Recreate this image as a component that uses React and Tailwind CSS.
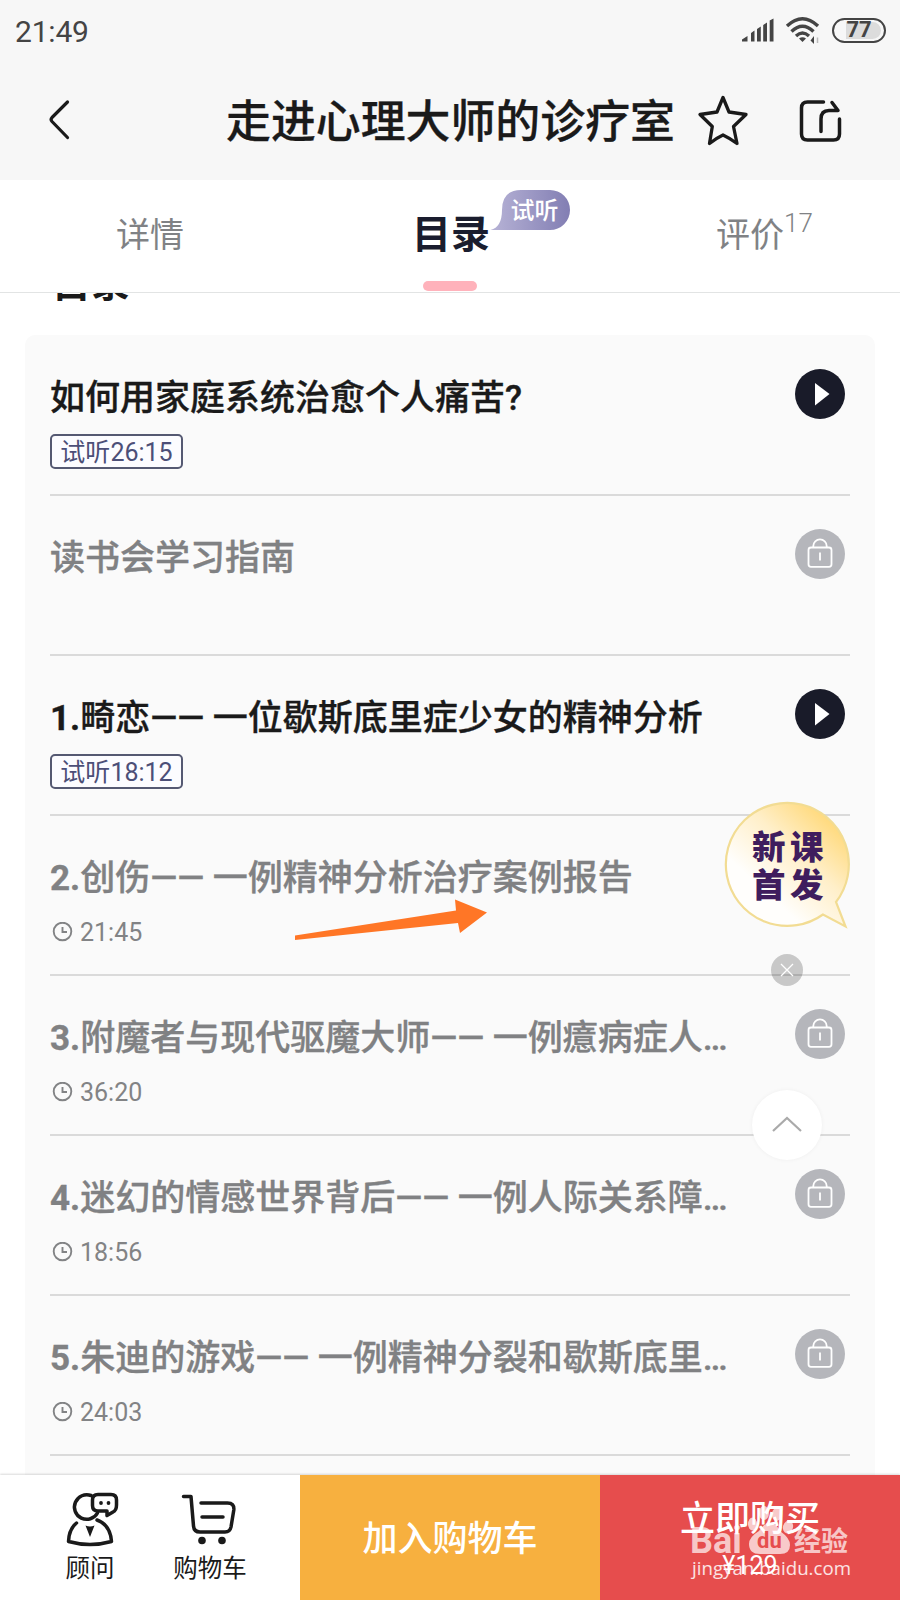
import React from 'react';

const lessons = [
  { title: '如何用家庭系统治愈个人痛苦?', time: '26:15', trial: true },
  { title: '读书会学习指南' },
  { no: '1.', title: '畸恋—— 一位歇斯底里症少女的精神分析', time: '18:12', trial: true },
  { no: '2.', title: '创伤—— 一例精神分析治疗案例报告', time: '21:45' },
  { no: '3.', title: '附魔者与现代驱魔大师—— 一例癔病症人…', time: '36:20' },
  { no: '4.', title: '迷幻的情感世界背后—— 一例人际关系障…', time: '18:56' },
  { no: '5.', title: '朱迪的游戏—— 一例精神分裂和歇斯底里…', time: '24:03' },
];

const App = () => {
  return (
    <div className="relative flex h-[1600px] w-[900px] flex-col overflow-hidden bg-white font-['Roboto','Noto_Sans_CJK_SC',sans-serif] text-[#1a1a1a]">
      <header className="h-[180px] shrink-0 bg-[#f7f7f7]">
        <StatusBar />
        <div className="flex h-[120px] items-center pl-[47px] pr-[57px]">
          <BackIcon />
          <h1 className="ml-[154px] whitespace-nowrap pt-[6px] text-[44.9px] font-medium leading-[60px] [-webkit-text-stroke:0.3px]">走进心理大师的诊疗室</h1>
          <StarIcon />
          <ShareIcon />
        </div>
      </header>

      <Tabs />

      <main className="min-h-0 flex-1 overflow-hidden px-[25px]">
        <h2 className="-mt-[37px] ml-[27px] h-[79px] text-[39px] font-bold leading-[56px]">目录</h2>
        <ul className="h-[1200px] rounded-[10px] bg-[#fafafa] px-[25px] pt-px">
          {lessons.map((lesson) => (
            <Lesson key={lesson.title} {...lesson} />
          ))}
        </ul>
      </main>

      <BottomBar />

      <Arrow />
      <Promo />
      <Watermark />
    </div>
  );
};

const StatusBar = () => (
  <div className="flex h-[60px] items-center pl-[15px] pr-[14px] text-[#444]">
    <span className="flex-1 pt-[3px] text-[30px] leading-none tracking-[-0.2px]">21:49</span>
    <svg width="33" height="24" viewBox="0 0 33 24" fill="currentColor">
      <path d="M1 23.500V21.500L6.500 18V23.500ZM10 23.500V15L13.500 12.500V23.500ZM16 23.500V11L19.800 8.500V23.500ZM22.200 23.500V7L26 4.500V23.500ZM28.700 23.500V2.500L32.500 .500V23.500Z" />
    </svg>
    <svg className="ml-[11px]" width="36" height="28" viewBox="0 0 36 28" fill="none" stroke="currentColor" strokeWidth="3.400">
      <path d="M2 10Q17.500 -4.500 33 10" />
      <path d="M6.500 15.500Q17.500 5 28.500 15.500" />
      <path d="M11 20Q17.500 14 24 20" />
      <path d="M17.500 26L14 22.500Q17.500 20 21 22.500Z" fill="currentColor" stroke="none" />
      <path d="M29 20V28L25.500 24.500Z" fill="currentColor" stroke="none" />
      <path d="M32.500 27V21.500" stroke="#bbb" strokeWidth="1.500" />
    </svg>
    <div className="relative ml-[11px] flex h-[25px] w-[54px] items-center justify-center rounded-full border-2 border-[#444]">
      <span className="absolute right-[3px] top-[2px] h-[17px] w-[35px] rounded-r-full bg-[#dcdcdc]" />
      <span className="relative text-[22px] font-bold leading-none">77</span>
    </div>
  </div>
);

const Tabs = () => (
  <nav className="relative z-10 grid h-[113px] shrink-0 grid-cols-3 border-b border-[#e2e4e4] bg-white text-center text-[34px] leading-[50px] text-[#808285]">
    <div className="pt-[30px]">详情</div>
    <div className="relative pl-[2px] pt-[30px] text-[39px] font-bold text-[#1a1d2e]">
      目录
      <span className="absolute bottom-[1px] left-[123px] h-[10px] w-[54px] rounded-full bg-[#ffb2bb]" />
      <div className="absolute left-[190px] top-[10px] h-10 w-20">
        <svg className="absolute inset-0" width="80" height="40" viewBox="0 0 80 40">
          <defs>
            <linearGradient id="tag">
              <stop offset="0" stopColor="#b7b3d6" />
              <stop offset="1" stopColor="#827eb3" />
            </linearGradient>
          </defs>
          <path d="M.500 40Q12 37 12 20Q12 0 31 0H60A20 20 0 0 1 60 40Z" fill="url(#tag)" />
        </svg>
        <span className="relative block pl-[9px] pt-px text-[24px] font-medium leading-10 text-white">试听</span>
      </div>
    </div>
    <div className="relative pt-[30px]">
      <span>评价</span>
      <span className="absolute left-[184px] top-[30px] text-[26px] font-light leading-[26px]">17</span>
    </div>
  </nav>
);

const Lesson = ({ no, title, time, trial }) => (
  <li className="flex h-40 justify-between border-b-2 border-[#dadada]">
    <div className="pt-[38px]">
      <h3 className={trial ? 'whitespace-nowrap text-[35px] font-medium leading-[50px] text-[#1a1a1a] [-webkit-text-stroke:0.35px]' : 'whitespace-nowrap text-[35px] font-medium leading-[50px] text-[#808183] [-webkit-text-stroke:0.35px]'}>
        <span className="font-bold">{no}</span>
        {title}
      </h3>
      {trial && (
        <span className="mt-[10px] flex h-[35px] w-[133px] items-center justify-center rounded-[5px] border-2 border-[#555972] bg-[#fcfcff] pt-px text-[25px] leading-none text-[#4c4f78]">
          试听{time}
        </span>
      )}
      {!trial && time && (
        <span className="mt-[13px] flex h-[30px] items-center gap-[7px] pl-[2px] text-[25px] leading-none text-[#828385]">
          <svg width="21" height="21" viewBox="0 0 21 21" fill="none" stroke="currentColor" strokeWidth="1.900">
            <circle cx="10.500" cy="9.500" r="8.800" />
            <path d="M10.500 5V10H15" />
          </svg>
          {time}
        </span>
      )}
    </div>
    <div className="mr-[5px] mt-[33px]">{trial ? <PlayIcon /> : <LockIcon />}</div>
  </li>
);

const PlayIcon = () => (
  <svg width="50" height="50" viewBox="0 0 50 50">
    <circle cx="25" cy="25" r="25" fill="#191b29" />
    <path d="M20 14L34.500 25L20 36.500Z" fill="#fff" />
  </svg>
);

const LockIcon = () => (
  <svg width="50" height="50" viewBox="0 0 50 50" fill="none" stroke="#fff" strokeWidth="1.800">
    <circle cx="25" cy="25" r="25" fill="#b5b6bb" stroke="none" />
    <rect x="13.500" y="18.500" width="23" height="19.300" rx="2.500" />
    <path d="M18.300 18.500V17A6.700 6.700 0 0 1 31.700 17V18.500M25 23.500V31.500" />
  </svg>
);

const BackIcon = () => (
  <svg width="25" height="42" viewBox="0 0 25 42" fill="none" stroke="currentColor" strokeWidth="3.200" strokeLinecap="round" strokeLinejoin="round">
    <path d="M20.500 3L5 18.500Q3.200 20.500 5 22.500L20.500 38.500" />
  </svg>
);

const StarIcon = () => (
  <svg className="ml-[22px]" width="52" height="52" viewBox="0 0 52 52" fill="none" stroke="currentColor" strokeWidth="3.300" strokeLinejoin="round">
    <path d="M26 3.500L32 18L49 20.500L36.500 32.500L40 49.500Q32.500 44 26 41Q19.500 44 12.500 49.500L15.300 32.500L3 20.500L20 18Z" />
  </svg>
);

const ShareIcon = () => (
  <svg className="ml-auto mt-[2px]" width="44" height="44" viewBox="0 0 44 44" fill="none" stroke="currentColor" strokeWidth="3.500" strokeLinecap="round" strokeLinejoin="round">
    <path d="M24.500 3H8.500Q2.500 3 2.500 9V35Q2.500 41 8.500 41H34.500Q40.500 41 40.500 35V20" />
    <path d="M22 32.500V20Q22 11.500 30 11.500H39L33 3.500" />
  </svg>
);

const BottomBar = () => (
  <footer className="relative z-10 grid h-[125px] shrink-0 grid-cols-3 bg-white shadow-[0_-1px_2px_rgba(0,0,0,0.15)]">
    <div className="flex pl-[60px] pt-[14px] text-[24.500px] leading-[34px]">
      <div className="flex w-[60px] flex-col items-center">
        <svg width="60" height="60" viewBox="0 0 60 60" fill="none" stroke="currentColor" strokeWidth="3.500" strokeLinecap="round" strokeLinejoin="round">
          <path d="M31 6.500A12.300 12.300 0 1 0 37.500 24" />
          <path d="M16.500 34Q9 40 8.500 52.500Q30 58.500 51.500 52.500Q50.500 36 37 31" />
          <path d="M25.500 36.500Q30 38.500 34.500 36.500L30 48Z" fill="currentColor" stroke="none" />
          <path d="M38 5.500H51Q56.500 5.500 56.500 11V16Q56.500 21.500 53 23L47 26.500V22H38Q32.500 22 32.500 16.500V11Q32.500 5.500 38 5.500Z" />
          <circle cx="41" cy="14" r="1.900" fill="currentColor" stroke="none" />
          <circle cx="48.500" cy="14" r="1.900" fill="currentColor" stroke="none" />
        </svg>
        <span className="mt-[3px]">顾问</span>
      </div>
      <div className="ml-[50px] flex w-20 flex-col items-center">
        <svg width="60" height="60" viewBox="0 0 60 60" fill="none" stroke="currentColor" strokeWidth="3.500" strokeLinecap="round" strokeLinejoin="round">
          <path d="M3.500 7.500H11L13.500 37Q14 43 20 43H45Q50 43 51 38L53.800 21Q54.500 14 47.500 14H21" />
          <path d="M22 28H43" />
          <circle cx="22" cy="51.500" r="3.800" fill="currentColor" stroke="none" />
          <circle cx="42" cy="51.500" r="3.800" fill="currentColor" stroke="none" />
        </svg>
        <span className="mt-[3px] whitespace-nowrap">购物车</span>
      </div>
    </div>
    <button className="bg-[#f7b03f] pt-[6px] text-[35px] font-medium text-white">加入购物车</button>
    <button className="flex flex-col items-center bg-[#e64d4d] pt-[20px] text-white">
      <span className="text-[35px] font-medium leading-[50px]">立即购买</span>
      <span className="mt-[6px] text-[25px] leading-[30px]">¥129</span>
    </button>
  </footer>
);

const Arrow = () => (
  <svg className="absolute left-[294px] top-[898px]" width="194" height="44" viewBox="0 0 194 44">
    <path d="M1 37.500L162 12.500L161 1.500L193 14.500L166 35L164 25L1 42Z" fill="#ff7626" />
  </svg>
);

const Promo = () => (
  <div className="absolute left-[724px] top-[801px] flex w-[127px] flex-col items-center">
    <div className="relative h-[128px] w-[127px]">
      <svg className="absolute inset-0" width="127" height="128" viewBox="0 0 127 128">
        <defs>
          <linearGradient id="promo" x1="0.850" y1="0.100" x2="0.300" y2="0.700">
            <stop offset="0" stopColor="#ffd877" />
            <stop offset="0.500" stopColor="#ffefc9" />
            <stop offset="1" stopColor="#fffefc" />
          </linearGradient>
        </defs>
        <path d="M112 101A61.500 61.500 0 1 0 99 113.500L121.500 125.500Z" fill="url(#promo)" stroke="#f2dc93" strokeWidth="2.200" />
      </svg>
      <div className="relative pl-[28px] pt-[28px] text-[33.500px] font-black leading-[38px] tracking-[4.500px] text-[#3f1d5e]">
        <p>新课</p>
        <p>首发</p>
      </div>
    </div>
    <span className="mr-px mt-[25px] flex size-8 items-center justify-center rounded-full bg-black/20">
      <svg width="14" height="14" viewBox="0 0 14 14" stroke="#fff" strokeWidth="1.300">
        <path d="M1 1L13 13M13 1L1 13" />
      </svg>
    </span>
    <span className="mr-px mt-[104px] flex size-[70px] items-center justify-center rounded-full bg-white shadow-[0_0_4px_rgba(0,0,0,0.05)]">
      <svg width="30" height="18" viewBox="0 0 30 18" fill="none" stroke="#aaa" strokeWidth="2.200">
        <path d="M1 15L15 2L29 15" />
      </svg>
    </span>
  </div>
);

const Watermark = () => (
  <div className="absolute left-[690px] top-[1504px] z-20 w-[162px] text-white/70">
    <div className="flex h-[54px] items-end">
      <span className="w-[58px] text-[36px] font-bold leading-[34px]">Bai</span>
      <div className="relative h-[54px] w-[46px]">
        <svg width="46" height="54" viewBox="0 0 46 54" fill="currentColor">
          <ellipse cx="4.500" cy="20" rx="4.500" ry="6.500" />
          <ellipse cx="16" cy="9" rx="5" ry="7" />
          <ellipse cx="29" cy="10" rx="5" ry="7" transform="rotate(10 29 10)" />
          <ellipse cx="40" cy="23" rx="5" ry="6.500" transform="rotate(15 40 23)" />
          <path d="M22 19Q28 19 32 27Q42 34 42 41Q42 50 32 50H12Q1 50 1 40Q1 33 11 27Q16 19 22 19Z" />
        </svg>
        <span className="absolute left-[9px] top-[26px] text-[22px] font-bold leading-[22px] text-[#e64d4d]">du</span>
      </div>
      <span className="whitespace-nowrap text-[27px] font-bold leading-[32px]">经验</span>
    </div>
    <p className="-mt-[3px] pl-[2px] font-['Open_Sans',sans-serif] text-[18.700px] leading-[26px] text-white/85">jingyan.baidu.com</p>
  </div>
);

export default App;
